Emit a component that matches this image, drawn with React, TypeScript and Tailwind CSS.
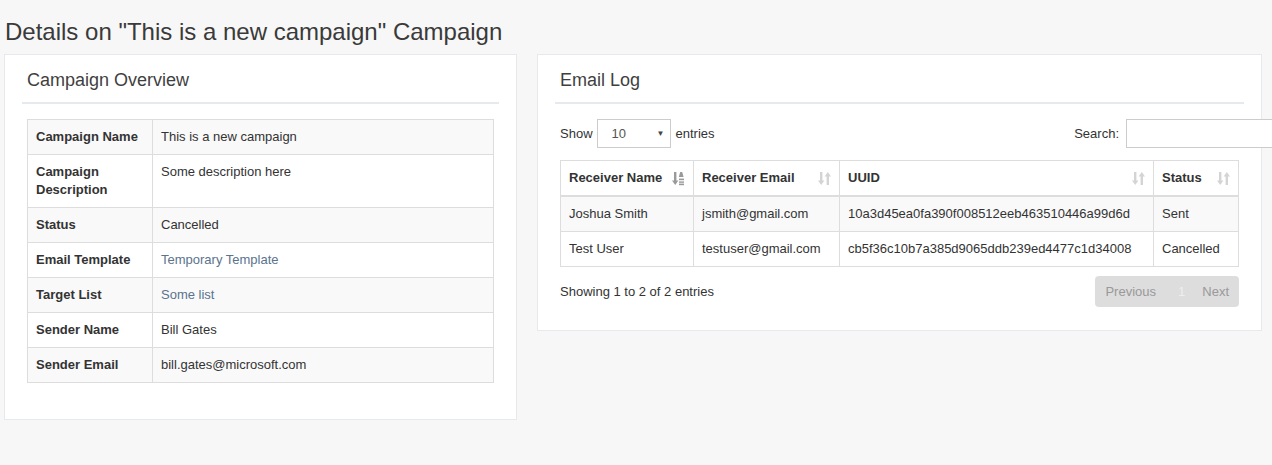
import React from "react";

const SortBoth = () => (
  <svg width="13" height="15" viewBox="0 0 13 15" className="shrink-0">
    <g fill="#d4d4d4">
      <rect x="2" y="1" width="2.4" height="10" />
      <polygon points="0,9.5 6.4,9.5 3.2,14" />
      <rect x="8.6" y="4" width="2.4" height="10" />
      <polygon points="6.6,5.5 13,5.5 9.8,1" />
    </g>
  </svg>
);

const SortAlpha = () => (
  <svg width="13" height="15" viewBox="0 0 13 15" className="shrink-0">
    <g fill="#9a9a9a">
      <rect x="2" y="1" width="2.4" height="10" />
      <polygon points="0,9.5 6.4,9.5 3.2,14" />
      <polygon points="8.2,1 10.2,1 11.6,6 6.8,6" />
      <rect x="7" y="7.6" width="5" height="1.6" />
      <rect x="7" y="10.4" width="5" height="1.4" />
      <rect x="7" y="12.6" width="5" height="1.6" />
    </g>
  </svg>
);

const leftRows: { label: React.ReactNode; value: React.ReactNode; link?: boolean }[] = [
  { label: "Campaign Name", value: "This is a new campaign" },
  { label: <>Campaign<br />Description</>, value: "Some description here" },
  { label: "Status", value: "Cancelled" },
  { label: "Email Template", value: "Temporary Template", link: true },
  { label: "Target List", value: "Some list", link: true },
  { label: "Sender Name", value: "Bill Gates" },
  { label: "Sender Email", value: "bill.gates@microsoft.com" },
];

const logRows = [
  ["Joshua Smith", "jsmith@gmail.com", "10a3d45ea0fa390f008512eeb463510446a99d6d", "Sent"],
  ["Test User", "testuser@gmail.com", "cb5f36c10b7a385d9065ddb239ed4477c1d34008", "Cancelled"],
];

export default function App() {
  return (
    <div
      className="w-full h-[465px] overflow-hidden bg-[#f7f7f7] text-[#333333]"
      style={{ fontFamily: '"Liberation Sans", Arial, sans-serif' }}
    >
      <h1 className="text-[24px] leading-[26px] pl-[5px] pt-[19px] pb-[9px] text-[#3a3a3a]">
        Details on "This is a new campaign" Campaign
      </h1>
      <div className="flex items-start">
        {/* Left panel */}
        <div className="ml-[4px] w-[513px] bg-white border border-[#e6e9ed] px-[17px] pb-[36px]">
          <div className="px-[5px] pt-[15px] pb-[12px] border-b-2 border-[#e6e9ed]">
            <h2 className="text-[18px] leading-[20px] text-[#3f3f3f]">Campaign Overview</h2>
          </div>
          <div className="px-[5px] mt-[15px]">
            <table className="w-full border-collapse text-[13px] leading-[18px]">
              <tbody>
                {leftRows.map((r, i) => (
                  <tr key={i} className={i % 2 === 0 ? "bg-[#f9f9f9]" : "bg-white"}>
                    <td className="w-[125px] border border-[#dddddd] px-2 py-2 align-top font-bold text-[#333]">
                      {r.label}
                    </td>
                    <td className={`border border-[#dddddd] px-2 py-2 align-top ${r.link ? "text-[#5a738e]" : "text-[#333]"}`}>
                      {r.value}
                    </td>
                  </tr>
                ))}
              </tbody>
            </table>
          </div>
        </div>

        {/* Right panel */}
        <div className="ml-[20px] w-[725px] bg-white border border-[#e6e9ed] px-[17px] pb-[23px]">
          <div className="px-[5px] pt-[15px] pb-[12px] border-b-2 border-[#e6e9ed]">
            <h2 className="text-[18px] leading-[20px] text-[#3f3f3f]">Email Log</h2>
          </div>
          <div className="px-[5px] mt-[15px]">
            <div className="flex items-center justify-between text-[13px] h-[29px]">
              <div className="flex items-center">
                <span>Show</span>
                <div className="ml-[4px] w-[74px] h-[29px] border border-[#cccccc] flex items-center justify-between pl-[14px] pr-[5px]">
                  <span className="text-[13px] text-[#555]">10</span>
                  <span className="text-[8px] text-[#444]">▼</span>
                </div>
                <span className="ml-[5px]">entries</span>
              </div>
              <div className="flex items-center mr-[-47px] shrink-0">
                <span>Search:</span>
                <div className="ml-[7px] w-[160px] h-[29px] border border-[#cccccc] bg-white shrink-0" />
              </div>
            </div>
            <table className="mt-[12px] w-full border-collapse text-[13px] leading-[18px] table-fixed">
              <thead>
                <tr>
                  <th className="w-[133px] border border-[#dddddd] border-b-2 px-2 py-2 text-left font-bold">
                    <div className="flex items-center justify-between">
                      <span>Receiver Name</span>
                      <SortAlpha />
                    </div>
                  </th>
                  <th className="w-[146px] border border-[#dddddd] border-b-2 px-2 py-2 text-left font-bold">
                    <div className="flex items-center justify-between">
                      <span>Receiver Email</span>
                      <SortBoth />
                    </div>
                  </th>
                  <th className="w-[314px] border border-[#dddddd] border-b-2 px-2 py-2 text-left font-bold">
                    <div className="flex items-center justify-between">
                      <span>UUID</span>
                      <SortBoth />
                    </div>
                  </th>
                  <th className="border border-[#dddddd] border-b-2 px-2 py-2 text-left font-bold">
                    <div className="flex items-center justify-between">
                      <span>Status</span>
                      <SortBoth />
                    </div>
                  </th>
                </tr>
              </thead>
              <tbody>
                {logRows.map((r, i) => (
                  <tr key={i} className={i % 2 === 0 ? "bg-[#f9f9f9]" : "bg-white"}>
                    {r.map((c, j) => (
                      <td key={j} className="border border-[#dddddd] px-2 py-2 whitespace-nowrap">
                        {c}
                      </td>
                    ))}
                  </tr>
                ))}
              </tbody>
            </table>
            <div className="mt-[9px] flex items-center justify-between text-[13px]">
              <span>Showing 1 to 2 of 2 entries</span>
              <div className="flex items-center h-[31px] bg-[#dddddd] rounded-[4px] text-[13px] px-[10px]">
                <span className="text-[#999999]">Previous</span>
                <span className="ml-[22px] text-[#eeeeee]">1</span>
                <span className="ml-[17px] text-[#999999]">Next</span>
              </div>
            </div>
          </div>
        </div>
      </div>
    </div>
  );
}
